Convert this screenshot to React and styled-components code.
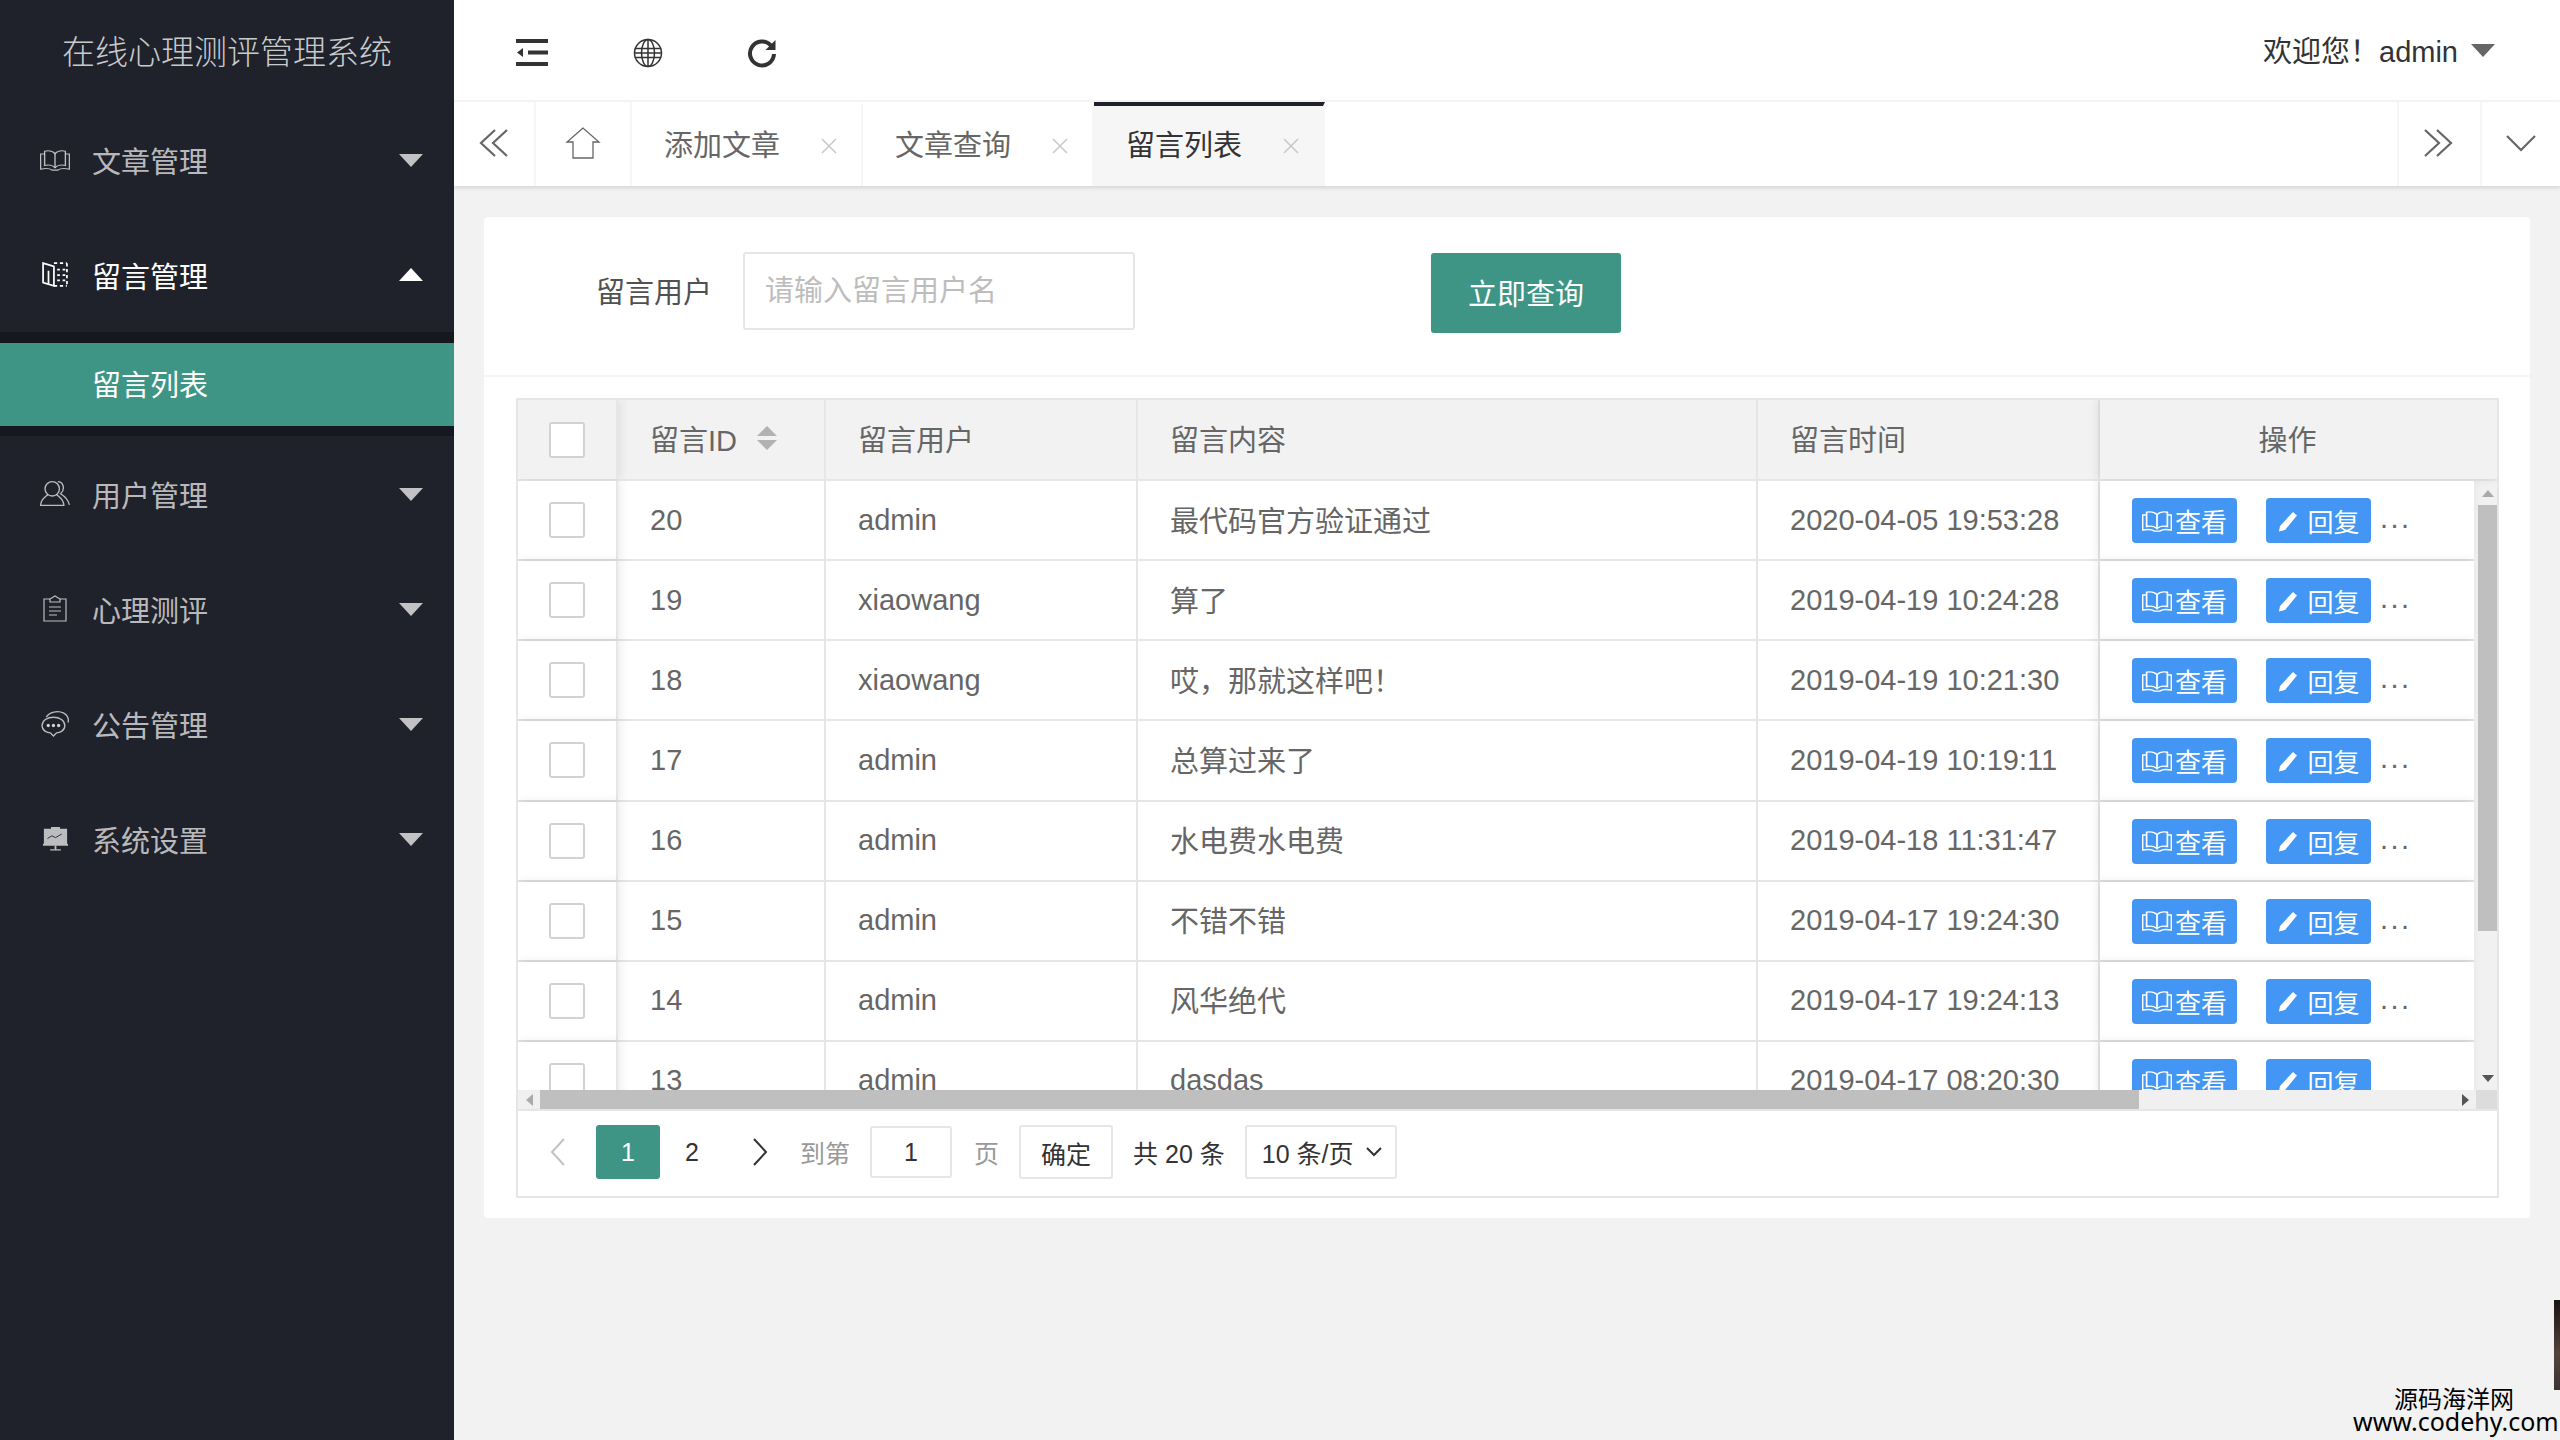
import styled, { createGlobalStyle } from "styled-components";

const GlobalStyle = createGlobalStyle`
  html, body {
    margin: 0;
    padding: 0;
    background: #f2f2f2;
  }
  * {
    box-sizing: border-box;
  }
  body {
    font-family: "Liberation Sans", "Noto Sans CJK SC", sans-serif;
    color: #666;
  }
`;

const teal = "#3e9586";
const blue = "#4396f3";
const line = "#e6e6e6";

const Page = styled.div`
  position: relative;
  display: grid;
  grid-template-columns: 454px 1fr;
  width: 2560px;
  height: 1440px;
  overflow: hidden;
`;

/* sidebar */
const Side = styled.aside`
  background: #1f222a;
`;

const Logo = styled.div`
  height: 102px;
  display: flex;
  align-items: center;
  justify-content: center;
  font-size: 33px;
  font-weight: 300;
  color: #c9cacc;
  padding-bottom: 2px;
`;

const MenuRow = styled.div`
  height: 115px;
  display: flex;
  align-items: center;
  padding-left: 40px;
  padding-right: 31px;
  color: ${(p) => (p.$open ? "#fff" : "rgba(255,255,255,.7)")};
  font-size: 29px;
`;

const MenuIcon = styled.span`
  width: 30px;
  height: 30px;
  margin-right: 22px;
  display: flex;
  align-items: center;
  justify-content: center;
`;

const MenuLabel = styled.span`
  flex: 1;
`;

const Tri = styled.i`
  width: 0;
  height: 0;
  margin-top: ${(p) => (p.$up ? "0" : "2px")};
  border-left: 12px solid transparent;
  border-right: 12px solid transparent;
  border-top: ${(p) => (p.$up ? "0" : `13px solid ${p.$color}`)};
  border-bottom: ${(p) => (p.$up ? `13px solid ${p.$color}` : "0")};
`;

const SubMenu = styled.div`
  background: #15181f;
  padding: 11px 0 10px;
`;

const SubItem = styled.div`
  height: 83px;
  background: ${teal};
  color: #fff;
  font-size: 29px;
  display: flex;
  align-items: center;
  padding-left: 92px;
  padding-bottom: 3px;
`;

/* top bar */
const Content = styled.main`
  display: flex;
  flex-direction: column;
  min-width: 0;
`;

const TopBar = styled.header`
  height: 102px;
  background: #fff;
  border-bottom: 2px solid #f6f6f6;
  display: flex;
  align-items: center;
  padding: 0 65px 0 62px;
  color: #333;
`;

const TopIcon = styled.span`
  width: 32px;
  height: 32px;
  margin-right: ${(p) => p.$gap}px;
  margin-top: 5px;
  display: flex;
  align-items: center;
  justify-content: center;
`;

const Welcome = styled.div`
  margin-left: auto;
  display: flex;
  align-items: center;
  font-size: 29px;
  color: #333;
  gap: 13px;
  margin-bottom: 2px;
`;

/* tabs */
const TabBar = styled.nav`
  height: 84px;
  background: #fff;
  display: flex;
  box-shadow: 0 2px 4px rgba(0, 0, 0, 0.12);
  position: relative;
`;

const TabTool = styled.div`
  width: ${(p) => p.$w}px;
  display: flex;
  align-items: center;
  justify-content: center;
  padding-bottom: 2px;
  padding-right: ${(p) => (p.$left ? "4px" : "0")};
  border-right: ${(p) => (p.$noEdge ? "0" : "2px solid #f6f6f6")};
  border-left: ${(p) => (p.$left ? "2px solid #f6f6f6" : "0")};
`;

const Tab = styled.div`
  width: 231px;
  display: flex;
  align-items: center;
  padding-left: 32px;
  font-size: 29px;
  color: ${(p) => (p.$active ? "#333" : "#666")};
  background: ${(p) => (p.$active ? "#f6f6f6" : "#fff")};
  border-right: 2px solid #f6f6f6;
  border-top: 4px solid ${(p) => (p.$active ? "#1f222a" : "transparent")};
  padding-bottom: 6px;
`;

const TabClose = styled.span`
  margin-left: 41px;
  margin-top: 5px;
  width: 16px;
  height: 16px;
  display: flex;
`;

const TabSpacer = styled.div`
  flex: 1;
`;

/* main card */
const Body = styled.div`
  flex: 1;
  padding: 31px 30px 0;
`;

const Card = styled.section`
  background: #fff;
  border-radius: 4px;
  padding-bottom: 20px;
`;

const SearchForm = styled.form`
  height: 160px;
  border-bottom: 2px solid #f6f6f6;
  display: flex;
  align-items: center;
  padding-left: 112px;
  padding-bottom: 6px;
  font-size: 29px;
`;

const FormLabel = styled.label`
  color: #333;
  width: 147px;
  opacity: 0.85;
  margin-bottom: 6px;
`;

const SearchInput = styled.input`
  width: 392px;
  height: 78px;
  border: 2px solid #e6e6e6;
  border-radius: 3px;
  padding: 2px 20px 0;
  font: inherit;
  margin-bottom: 5px;
  &::placeholder {
    color: #bdbdbd;
    opacity: 1;
  }
`;

const QueryBtn = styled.button`
  margin-left: 296px;
  width: 190px;
  height: 80px;
  border: 0;
  border-radius: 3px;
  background: ${teal};
  color: #fff;
  font: inherit;
  padding-bottom: 4px;
`;

const TableBox = styled.div`
  margin: 21px 31px 0 32px;
  border: 2px solid ${line};
  height: 800px;
  display: flex;
  flex-direction: column;
  overflow: hidden;
`;

const Grid = styled.div`
  display: grid;
  grid-template-columns: 100px 208px 312px 620px 342px 1fr;
`;

const HeadRow = styled(Grid)`
  height: 81px;
  background: #f2f2f2;
  border-bottom: 2px solid ${line};
  font-size: 29px;
  flex: none;
`;

const Cell = styled.div`
  display: flex;
  align-items: center;
  padding-left: 32px;
  padding-bottom: ${(p) => (p.$cjk ? "3px" : "0")};
  border-right: 2px solid ${line};
  white-space: nowrap;
  position: relative;
  &:last-child {
    border-right: 0;
  }
`;

const CheckCell = styled(Cell)`
  padding: 0 0 0 31px;
  background: ${(p) => (p.$head ? "#f2f2f2" : "#fff")};
  box-shadow: 2px 0 10px rgba(0, 0, 0, 0.09);
  z-index: 1;
`;

const OpsHead = styled(Cell)`
  justify-content: center;
  padding: 0 22px 3px 0;
  background: #f2f2f2;
  box-shadow: -2px 0 10px rgba(0, 0, 0, 0.09);
`;

const OpsCell = styled(Cell)`
  padding-left: 32px;
  background: #fff;
  box-shadow: -2px 0 10px rgba(0, 0, 0, 0.09);
  gap: 29px;
  align-items: flex-start;
  padding-top: 17px;
`;

const Check = styled.span`
  width: 36px;
  height: 36px;
  background: #fff;
  border: 2px solid #d2d2d2;
  border-radius: 3px;
`;

const SortMark = styled.span`
  display: inline-flex;
  flex-direction: column;
  gap: 4px;
  margin-left: 20px;
`;

const SortTri = styled.i`
  width: 0;
  height: 0;
  border-left: 10px solid transparent;
  border-right: 10px solid transparent;
  border-top: ${(p) => (p.$up ? "0" : "10px solid #b2b2b2")};
  border-bottom: ${(p) => (p.$up ? "10px solid #b2b2b2" : "0")};
`;

const Middle = styled.div`
  height: 609px;
  flex: none;
  display: flex;
  overflow: hidden;
`;

const Rows = styled.div`
  flex: 1;
  min-width: 0;
`;

const Row = styled(Grid)`
  height: 80.14px;
  border-bottom: 2px solid ${line};
  font-size: 29px;
`;

const ActionBtn = styled.span`
  width: 105px;
  height: 45px;
  background: ${blue};
  border-radius: 4px;
  color: #fff;
  font-size: 26px;
  display: flex;
  align-items: center;
  justify-content: center;
  gap: ${(p) => p.$gap}px;
`;

const Dots = styled.span`
  position: absolute;
  left: 280px;
  top: 21px;
  font-size: 29px;
  letter-spacing: 2.5px;
  color: #666;
`;

const VBar = styled.div`
  width: 23px;
  flex: none;
  background: #f1f1f1;
  display: flex;
  flex-direction: column;
  align-items: flex-end;
`;

const VArrow = styled.div`
  height: 24px;
  width: 19px;
  display: flex;
  align-items: center;
  justify-content: center;
`;

const VThumb = styled.div`
  width: 19px;
  height: 426px;
  background: #bfbfbf;
  margin-bottom: auto;
`;

const HBar = styled.div`
  height: 21px;
  flex: none;
  display: flex;
  align-items: center;
  background: #f0f0f0;
  border-bottom: 2px solid ${line};
`;

const HArrow = styled.div`
  width: 22px;
  height: 100%;
  display: flex;
  align-items: center;
  justify-content: center;
`;

const HThumb = styled.div`
  width: 1599px;
  height: 19px;
  background: #bfbfbf;
`;

const HTrack = styled.div`
  flex: 1;
`;

const HCorner = styled.div`
  width: 21px;
  height: 100%;
  background: #dcdcdc;
`;

const Pager = styled.div`
  flex: 1;
  display: flex;
  align-items: center;
  font-size: 25px;
  color: #333;
  padding-left: 32px;
  padding-bottom: 3px;
`;

const PagerArrow = styled.span`
  width: 16px;
  display: flex;
  margin: 0 ${(p) => p.$gap}px 0 ${(p) => p.$ml}px;
`;

const PageNum = styled.span`
  width: 64px;
  height: 54px;
  display: flex;
  align-items: center;
  justify-content: center;
  border-radius: 3px;
  background: ${(p) => (p.$on ? teal : "transparent")};
  color: ${(p) => (p.$on ? "#fff" : "#333")};
`;

const PagerMuted = styled.span`
  color: #999;
`;

const PagerInput = styled.span`
  width: 82px;
  height: 52px;
  border: 2px solid ${line};
  border-radius: 3px;
  margin: 0 22px 0 20px;
  display: flex;
  align-items: center;
  justify-content: center;
  color: #333;
`;

const PagerBtn = styled.span`
  width: 94px;
  height: 54px;
  margin-left: 20px;
  border: 2px solid ${line};
  border-radius: 3px;
  display: flex;
  align-items: center;
  justify-content: center;
  color: #333;
  padding-top: 2px;
`;

const PagerTotal = styled.span`
  margin: 0 20px;
`;

const PagerSelect = styled.span`
  width: 152px;
  height: 54px;
  border: 2px solid ${line};
  border-radius: 3px;
  display: flex;
  align-items: center;
  padding-left: 15px;
  gap: 13px;
`;

/* stuff baked into the screenshot */
const Watermark = styled.div`
  position: absolute;
  right: 5px;
  bottom: 7px;
  width: 202px;
  text-align: center;
  color: #000;
  font-family: "Noto Sans", "Noto Sans CJK SC", sans-serif;
  font-size: 25px;
  line-height: 23px;
  white-space: nowrap;
`;

const WatermarkCn = styled.div`
  font-size: 24px;
`;

const EdgeThumb = styled.div`
  position: absolute;
  right: 0;
  top: 1300px;
  width: 6px;
  height: 90px;
  background: linear-gradient(#1a1412, #55433c 60%, #3c3330);
`;

const BookIcon = ({ color = "currentColor", sw = 1.4 }) => (
  <svg width="30" height="22" viewBox="2 3 26 24" preserveAspectRatio="none" fill="none" stroke={color} strokeWidth={sw}>
    <path d="M15 8c-2-3-6-3.5-9-2.6V21c3-.9 7-.4 9 2.4 2-2.8 6-3.3 9-2.4V5.400C21 4.500 17 5 15 8z" />
    <path d="M15 8v15" />
    <path d="M6 8.500H2.500V25c4-1 8-.8 10 1h5c2-1.800 6-2 10-1V8.500H24" />
  </svg>
);

const OpenDoorIcon = () => (
  <svg width="26" height="27" viewBox="2 4 24 23" fill="none" stroke="#fff" strokeWidth="1.600">
    <path d="M3 5l10 3v18L3 23z" />
    <path d="M8 12v12" />
    <path d="M16 11h9M16 16h9M16 21h9" strokeDasharray="2.500 2.500" />
    <path d="M13 5h12M13 26h12M25 5v21" strokeDasharray="3 2.500" />
  </svg>
);

const UsersIcon = () => (
  <svg width="30" height="27" viewBox="1 3 27 22.500" fill="none" stroke="currentColor" strokeWidth="1.200">
    <circle cx="12" cy="10" r="6.500" />
    <path d="M8 15c-1 2-6 3-6.500 10h21C22 18 17 17 16 15" />
    <path d="M17 3.500c5 0 7 7 2.500 11 5 3 7 6 8 10" />
  </svg>
);

const ClipIcon = () => (
  <svg width="24" height="27" viewBox="3 1 24 27" fill="none" stroke="currentColor" strokeWidth="1.200">
    <path d="M10 5H4v22h22V5h-6" />
    <path d="M10 8V5l5-3 5 3v3z" />
    <path d="M9 13h12M9 17h12M9 21h8" />
  </svg>
);

const ChatIcon = () => (
  <svg width="28" height="27" viewBox="1 2 27 26" fill="none" stroke="currentColor" strokeWidth="1.300">
    <path d="M2 17c0-5 5-8 11-8s11 3 11 8-5 7-8 7l-3 3-3-3c-3 0-8-2-8-7z" />
    <path d="M6 9c3-5 11-7 17-4 4 2 5 6 4 9" />
    <circle cx="8" cy="17" r="1" fill="currentColor" />
    <circle cx="13" cy="17" r="1" fill="currentColor" />
    <circle cx="18" cy="17" r="1" fill="currentColor" />
  </svg>
);

const BoardIcon = () => (
  <svg width="27" height="25" viewBox="0 1 30 28" fill="currentColor" stroke="none">
    <path d="M10 2h10v2h-10zM2 4h26v17h1v2H1v-2h1z" />
    <path d="M14 23h2v4h5v1.500H9V27h5z" />
    <path d="M6 15l5-3 4 2 7-4" fill="none" stroke="#1f222a" strokeWidth="1" />
  </svg>
);

const PencilIcon = () => (
  <svg width="22" height="22" viewBox="0 0 22 22" fill="#fff">
    <path d="M16 2l4 3.500L8 20 2 21.500 3 16z" />
  </svg>
);

const Chevrons = ({ dir }) => (
  <svg width="30" height="28" viewBox="0 0 30 28" fill="none" stroke="#666" strokeWidth="2.200">
    {dir === "left" ? (
      <path d="M16 1L2 14l14 13M28 1L14 14l14 13" />
    ) : (
      <path d="M2 1l14 13L2 27M14 1l14 13-14 13" />
    )}
  </svg>
);

const ThinArrow = ({ dir, color }) => (
  <svg width="16" height="28" viewBox="0 0 16 28" fill="none" stroke={color} strokeWidth="2">
    <path d={dir === "left" ? "M14 1L2 14l12 13" : "M2 1l12 13L2 27"} />
  </svg>
);

const menus = [
  { label: "文章管理", icon: <BookIcon sw={1.2} /> },
  { label: "留言管理", icon: <OpenDoorIcon />, open: true },
  { label: "用户管理", icon: <UsersIcon /> },
  { label: "心理测评", icon: <ClipIcon /> },
  { label: "公告管理", icon: <ChatIcon /> },
  { label: "系统设置", icon: <BoardIcon /> },
];

const rows = [
  [20, "admin", "最代码官方验证通过", "2020-04-05 19:53:28"],
  [19, "xiaowang", "算了", "2019-04-19 10:24:28"],
  [18, "xiaowang", "哎，那就这样吧！", "2019-04-19 10:21:30"],
  [17, "admin", "总算过来了", "2019-04-19 10:19:11"],
  [16, "admin", "水电费水电费", "2019-04-18 11:31:47"],
  [15, "admin", "不错不错", "2019-04-17 19:24:30"],
  [14, "admin", "风华绝代", "2019-04-17 19:24:13"],
  [13, "admin", "dasdas", "2019-04-17 08:20:30"],
];

const tabs = ["添加文章", "文章查询", "留言列表"];

const Sidebar = () => (
  <Side>
    <Logo>在线心理测评管理系统</Logo>
    {menus.map((m) => (
      <div key={m.label}>
        <MenuRow $open={m.open}>
          <MenuIcon>{m.icon}</MenuIcon>
          <MenuLabel>{m.label}</MenuLabel>
          <Tri $up={m.open} $color={m.open ? "#fff" : "#c2c2c4"} />
        </MenuRow>
        {m.open && (
          <SubMenu>
            <SubItem>留言列表</SubItem>
          </SubMenu>
        )}
      </div>
    ))}
  </Side>
);

const Header = () => (
  <TopBar>
    <TopIcon $gap={84}>
      <svg width="32" height="28" viewBox="0 0 32 28" fill="#333">
        <rect x="0" y="0" width="32" height="4" />
        <rect x="0" y="23" width="32" height="4" />
        <rect x="12" y="11.500" width="20" height="4" />
        <path d="M1 13.500L7 9v9z" />
      </svg>
    </TopIcon>
    <TopIcon $gap={82}>
      <svg width="30" height="30" viewBox="0 0 30 30" fill="none" stroke="#333" strokeWidth="1.500">
        <circle cx="15" cy="15" r="13.500" />
        <ellipse cx="15" cy="15" rx="6.500" ry="13.500" />
        <path d="M15 1.500v27M2 10.500h26M2 19.500h26M1.500 15h27" />
      </svg>
    </TopIcon>
    <TopIcon $gap={0}>
      <svg width="32" height="32" viewBox="0 0 32 32" fill="none" stroke="#333" strokeWidth="4">
        <path d="M25 8.500A12 12 0 1 0 28 17" />
        <path d="M29.500 3v10H19.500z" fill="#333" stroke="none" />
      </svg>
    </TopIcon>
    <Welcome>
      <span>欢迎您！admin</span>
      <Tri $color="#666" />
    </Welcome>
  </TopBar>
);

const TabStrip = () => (
  <TabBar>
    <TabTool $w={82}>
      <Chevrons dir="left" />
    </TabTool>
    <TabTool $w={96}>
      <svg width="36" height="32" viewBox="0 0 36 32" fill="none" stroke="#666" strokeWidth="1.300">
        <path d="M18 1L2 15h6v16h20V15h6z" />
      </svg>
    </TabTool>
    {tabs.map((t, i) => (
      <Tab key={t} $active={i === 2}>
        {t}
        <TabClose>
          <svg width="16" height="16" viewBox="0 0 16 16" stroke="#c8c8c8" strokeWidth="1.500">
            <path d="M1 1l14 14M15 1L1 15" />
          </svg>
        </TabClose>
      </Tab>
    ))}
    <TabSpacer />
    <TabTool $w={85} $left>
      <Chevrons dir="right" />
    </TabTool>
    <TabTool $w={78} $noEdge>
      <svg width="30" height="18" viewBox="0 0 30 18" fill="none" stroke="#666" strokeWidth="2.200">
        <path d="M1 2l14 14L29 2" />
      </svg>
    </TabTool>
  </TabBar>
);

const DataTable = () => (
  <TableBox>
    <HeadRow>
      <CheckCell $head>
        <Check />
      </CheckCell>
      <Cell $cjk>
        留言ID
        <SortMark>
          <SortTri $up />
          <SortTri />
        </SortMark>
      </Cell>
      <Cell $cjk>留言用户</Cell>
      <Cell $cjk>留言内容</Cell>
      <Cell $cjk>留言时间</Cell>
      <OpsHead>操作</OpsHead>
    </HeadRow>
    <Middle>
      <Rows>
        {rows.map((r, i) => (
          <Row key={r[0]}>
            <CheckCell>
              <Check />
            </CheckCell>
            <Cell>{r[0]}</Cell>
            <Cell>{r[1]}</Cell>
            <Cell $cjk={i < 7}>{r[2]}</Cell>
            <Cell>{r[3]}</Cell>
            <OpsCell>
              <ActionBtn $gap={3}>
                <BookIcon color="#fff" sw={1.500} />
                查看
              </ActionBtn>
              <ActionBtn $gap={8}>
                <PencilIcon />
                回复
              </ActionBtn>
              {i < 7 && <Dots>...</Dots>}
            </OpsCell>
          </Row>
        ))}
      </Rows>
      <VBar>
        <VArrow>
          <svg width="12" height="7" viewBox="0 0 12 7" fill="#aaa">
            <path d="M6 0l6 7H0z" />
          </svg>
        </VArrow>
        <VThumb />
        <VArrow>
          <svg width="12" height="7" viewBox="0 0 12 7" fill="#555">
            <path d="M6 7L0 0h12z" />
          </svg>
        </VArrow>
      </VBar>
    </Middle>
    <HBar>
      <HArrow>
        <svg width="7" height="12" viewBox="0 0 7 12" fill="#aaa">
          <path d="M0 6l7-6v12z" />
        </svg>
      </HArrow>
      <HThumb />
      <HTrack />
      <HArrow>
        <svg width="7" height="12" viewBox="0 0 7 12" fill="#555">
          <path d="M7 6L0 0v12z" />
        </svg>
      </HArrow>
      <HCorner />
    </HBar>
    <Pager>
      <PagerArrow $gap={30} $ml={0}>
        <ThinArrow dir="left" color="#c2c2c2" />
      </PagerArrow>
      <PageNum $on>1</PageNum>
      <PageNum>2</PageNum>
      <PagerArrow $gap={32} $ml={28}>
        <ThinArrow dir="right" color="#333" />
      </PagerArrow>
      <PagerMuted>到第</PagerMuted>
      <PagerInput>1</PagerInput>
      <PagerMuted>页</PagerMuted>
      <PagerBtn>确定</PagerBtn>
      <PagerTotal>共 20 条</PagerTotal>
      <PagerSelect>
        10 条/页
        <svg width="16" height="10" viewBox="0 0 16 10" fill="none" stroke="#333" strokeWidth="2">
          <path d="M1 1l7 7 7-7" />
        </svg>
      </PagerSelect>
    </Pager>
  </TableBox>
);

export default function App() {
  return (
    <Page>
      <GlobalStyle />
      <Sidebar />
      <Content>
        <Header />
        <TabStrip />
        <Body>
          <Card>
            <SearchForm>
              <FormLabel>留言用户</FormLabel>
              <SearchInput placeholder="请输入留言用户名" />
              <QueryBtn type="button">立即查询</QueryBtn>
            </SearchForm>
            <DataTable />
          </Card>
        </Body>
      </Content>
      <EdgeThumb />
      <Watermark>
        <WatermarkCn>源码海洋网</WatermarkCn>
        www.codehy.com
      </Watermark>
    </Page>
  );
}
